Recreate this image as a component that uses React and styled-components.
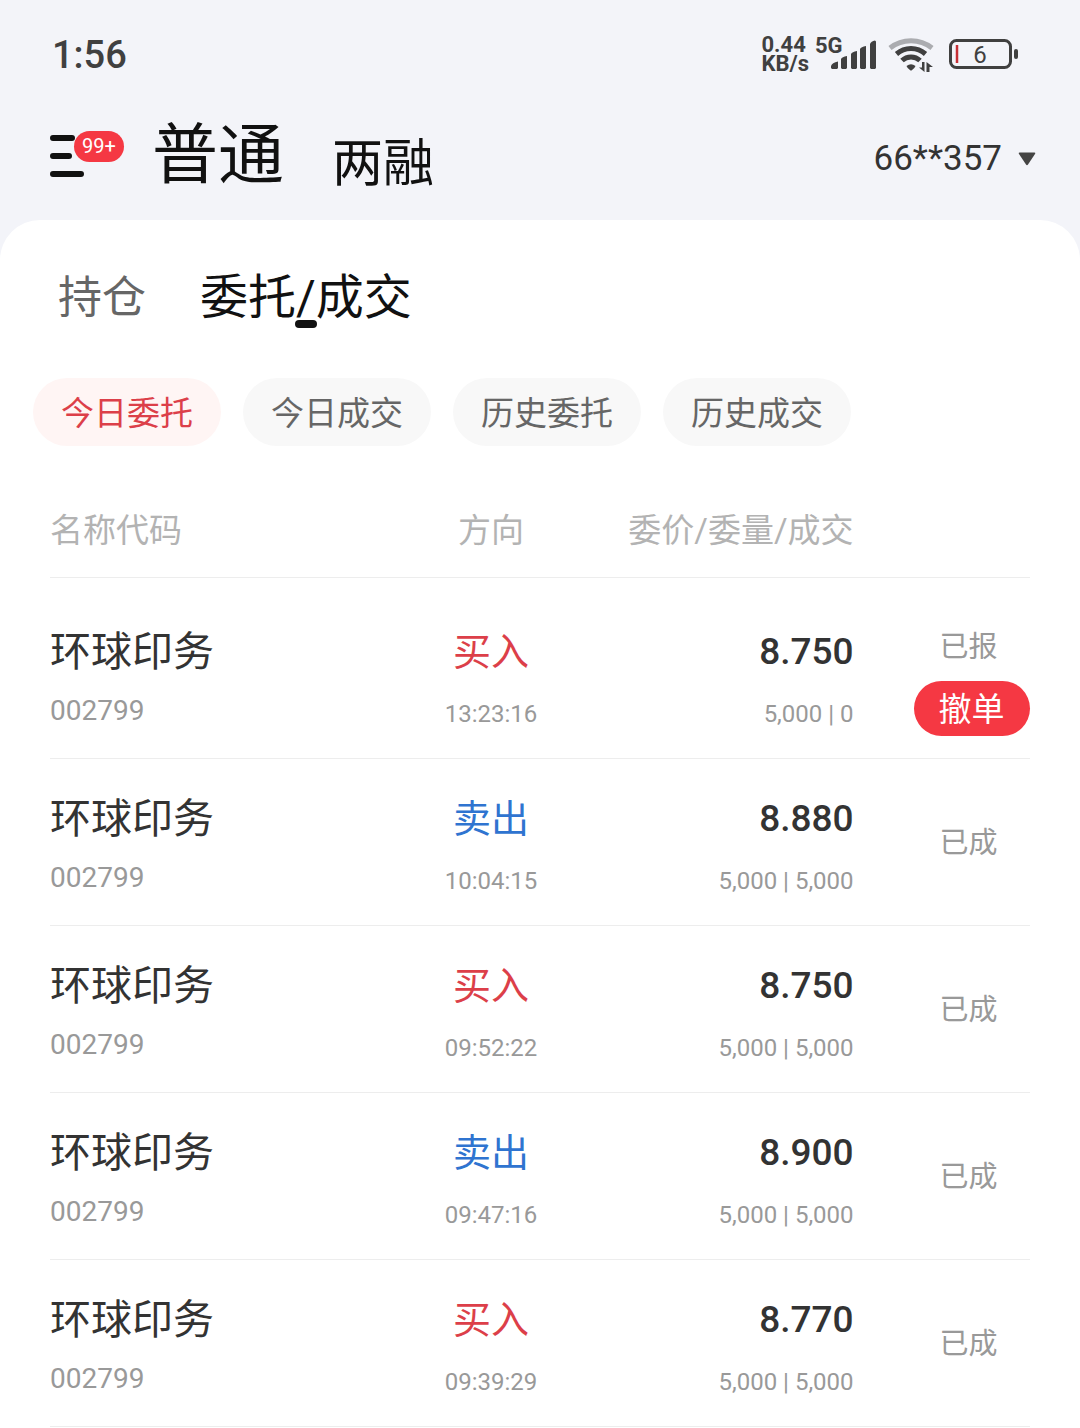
import React, { useState } from "react";
import styled, { createGlobalStyle } from "styled-components";

const GlobalStyle = createGlobalStyle`
  * {
    box-sizing: border-box;
  }

  body {
    margin: 0;
    background: #fff;
    color: #333;
    font-family: Roboto, "Noto Sans CJK SC", sans-serif;
  }

  button {
    margin: 0;
    padding: 0;
    border: 0;
    background: none;
    color: inherit;
    font: inherit;
    white-space: nowrap;
    cursor: pointer;
  }
`;

const Page = styled.div`
  min-height: 100vh;
  background: #f3f4f9;
`;

const StatusBar = styled.div`
  display: flex;
  align-items: center;
  justify-content: space-between;
  height: 108px;
  padding: 0 62px 0 52px;
  color: #404040;
`;

const Clock = styled.time`
  padding-top: 2px;
  font-size: 38px;
  font-weight: 500;
  line-height: 48px;
`;

const StatusIcons = styled.div`
  display: flex;
  align-items: center;
`;

const NetSpeed = styled.div`
  display: flex;
  flex-direction: column;
  margin-right: 6px;
  font-size: 22px;
  font-weight: 700;
  line-height: 19px;
`;

const Signal = styled.div`
  display: grid;
  width: 61px;
  height: 36px;
  margin-right: 12px;
  padding-bottom: 3px;

  > * {
    grid-area: 1 / 1;
  }

  svg {
    place-self: end;
  }
`;

const Network = styled.span`
  font-size: 22px;
  font-weight: 700;
  line-height: 19px;
`;

const WifiIcon = styled.svg`
  margin-right: 14px;
`;

const Header = styled.header`
  display: flex;
  align-items: center;
  justify-content: space-between;
  height: 112px;
  padding: 0 44px 16px 50px;
  color: #111;
`;

const HeaderLeft = styled.div`
  display: flex;
  align-items: center;
`;

const MenuButton = styled.button`
  position: relative;
  display: flex;
  width: 76px;
  margin-right: 26px;
`;

const MenuBadge = styled.span`
  position: absolute;
  top: -3px;
  left: 24px;
  padding: 0 8px;
  border-radius: 16px;
  background: #f53843;
  color: #fff;
  font-size: 20px;
  line-height: 31px;
`;

const AccountTypes = styled.nav`
  display: flex;
  align-items: flex-end;
  gap: 48px;
`;

const AccountType = styled.button`
  font-size: ${(props) => (props.$active ? "66px" : "51px")};
  line-height: ${(props) => (props.$active ? "80px" : "64px")};
`;

const AccountButton = styled.button`
  display: flex;
  align-items: center;
  gap: 16px;
  padding-top: 6px;
  color: #333;
  font-size: 35px;
  line-height: 48px;
`;

const Card = styled.main`
  min-height: calc(100vh - 220px);
  padding-top: 42px;
  border-radius: 40px 40px 0 0;
  background: #fff;
`;

const Tabs = styled.nav`
  display: flex;
  align-items: center;
  gap: 54px;
  padding: 0 58px;
`;

const Tab = styled.button`
  position: relative;
  color: ${(props) => (props.$active ? "#111" : "#666")};
  font-size: ${(props) => (props.$active ? "48px" : "44px")};
  line-height: 72px;

  &::after {
    content: "";
    position: absolute;
    bottom: 6px;
    left: calc(50% - 11px);
    display: ${(props) => (props.$active ? "block" : "none")};
    width: 22px;
    height: 8px;
    border-radius: 4px;
    background: #111;
  }
`;

const Chips = styled.div`
  display: flex;
  flex-wrap: wrap;
  gap: 22px;
  padding: 44px 33px 0;
`;

const Chip = styled.button`
  padding: 4px 28px 0;
  border-radius: 34px;
  background: ${(props) => (props.$active ? "#fff5f4" : "#f8f8f8")};
  color: ${(props) => (props.$active ? "#dc3f49" : "#666")};
  font-size: 33px;
  line-height: 64px;
`;

const TableWrapper = styled.div`
  padding: 61px 50px 0;
`;

const OrderTable = styled.table`
  width: 100%;
  table-layout: fixed;
  border-collapse: separate;
  border-spacing: 0;
`;

const Column = styled.col`
  width: ${(props) => props.$width};
`;

const HeadCell = styled.th`
  padding: 0 0 22px;
  border-bottom: 1px solid #ededed;
  color: #b3b3b3;
  font-size: 33px;
  font-weight: 400;
  line-height: 48px;
  text-align: ${(props) => props.$align || "left"};
  white-space: nowrap;
`;

const OrderRow = styled.tr`
  &:first-child > td {
    padding-top: 48px;
  }
`;

const Cell = styled.td`
  padding: 34px 0 26px;
  border-bottom: 1px solid #ededed;
  text-align: ${(props) => props.$align || "left"};
  vertical-align: top;
  white-space: nowrap;
`;

const StatusCell = styled(Cell)`
  padding: 36px 0 34px 60px;
  vertical-align: middle;

  ${OrderRow}:first-child > & {
    padding: 50px 0 22px 60px;
  }
`;

const StockName = styled.div`
  font-size: 41px;
  line-height: 52px;
`;

const StockCode = styled.div`
  margin-top: 15px;
  color: #999;
  font-size: 28px;
  line-height: 36px;
`;

const Direction = styled.div`
  color: ${(props) => (props.$side === "buy" ? "#dc3f49" : "#2f74d0")};
  font-size: 38px;
  line-height: 52px;
`;

const Price = styled.div`
  font-size: 37px;
  font-weight: 500;
  line-height: 52px;
`;

const SubText = styled.div`
  margin-top: 18px;
  color: #999;
  font-size: 24px;
  line-height: 36px;
`;

const StatusText = styled.div`
  padding-left: 26px;
  color: #999;
  font-size: 29px;
  line-height: 36px;
`;

const CancelButton = styled.button`
  display: block;
  width: 116px;
  margin-top: 16px;
  padding-top: 2px;
  border-radius: 28px;
  background: #f53843;
  color: #fff;
  font-size: 33px;
  line-height: 53px;
`;

const chips = ["今日委托", "今日成交", "历史委托", "历史成交"];

const orders = [
  { side: "buy", time: "13:23:16", price: "8.750", filled: "0", open: true },
  { side: "sell", time: "10:04:15", price: "8.880", filled: "5,000" },
  { side: "buy", time: "09:52:22", price: "8.750", filled: "5,000" },
  { side: "sell", time: "09:47:16", price: "8.900", filled: "5,000" },
  { side: "buy", time: "09:39:29", price: "8.770", filled: "5,000" },
];

const PhoneStatus = () => (
  <StatusBar>
    <Clock>1:56</Clock>
    <StatusIcons>
      <NetSpeed>
        <span>0.44</span>
        <span>KB/s</span>
      </NetSpeed>
      <Signal>
        <Network>5G</Network>
        <svg width="45" height="29" viewBox="0 0 45 29" fill="#404040">
          <path d="M0 28V26Q1 22.500 7 21.500V28L6 29H1Z" />
          <path d="M10 19Q11 17 16 16V28L15 29H11L10 28Z" />
          <path d="M20 14Q21 12 26 11V28L25 29H21L20 28Z" />
          <path d="M29 9Q30 7 35 6V28L34 29H30L29 28Z" />
          <path d="M39 4Q40 1 44 0.500L45 1.500V28L44 29H40L39 28Z" />
        </svg>
      </Signal>
      <WifiIcon width="46" height="36" viewBox="0 0 46 36" fill="none">
        <path d="M2 12A34 34 0 0 1 44 12" stroke="#abacb0" strokeWidth="5" />
        <path d="M8.500 18A22 22 0 0 1 37.500 18" stroke="#404040" strokeWidth="5" />
        <path d="M14 24.500A13 13 0 0 1 32 24.500" stroke="#404040" strokeWidth="5" />
        <path d="M18.500 30Q23 26.500 27.500 30Q27 32 23.500 34.500H22.500Q19 32 18.500 30Z" fill="#404040" />
        <path d="M36.500 26V36L31 31.500H34V26Z" fill="#404040" />
        <path d="M38.500 36V26L45 31H41.500V36Z" fill="#404040" />
      </WifiIcon>
      <svg width="70" height="32" viewBox="0 0 70 32">
        <rect x="2.500" y="2.500" width="60" height="27" rx="6" fill="none" stroke="#404040" strokeWidth="3" />
        <rect x="66" y="11" width="4" height="10" rx="2" fill="#404040" />
        <path d="M9 7V25" stroke="#c62f35" strokeWidth="2.500" />
        <text x="32" y="25" textAnchor="middle" fontSize="24" fill="#404040">
          6
        </text>
      </svg>
    </StatusIcons>
  </StatusBar>
);

const App = () => {
  const [chip, setChip] = useState(chips[0]);

  return (
    <Page>
      <GlobalStyle />
      <PhoneStatus />
      <Header>
        <HeaderLeft>
          <MenuButton type="button">
            <svg width="36" height="44" viewBox="0 0 36 44" stroke="#111" strokeWidth="6" strokeLinecap="round">
              <path d="M3 4H22M3 22H19M3 40H31" />
            </svg>
            <MenuBadge>99+</MenuBadge>
          </MenuButton>
          <AccountTypes>
            <AccountType type="button" $active>
              普通
            </AccountType>
            <AccountType type="button">两融</AccountType>
          </AccountTypes>
        </HeaderLeft>
        <AccountButton type="button">
          66**357
          <svg width="18" height="14" viewBox="0 0 18 14" fill="#444">
            <path d="M1.500 0.500H16.500Q18 0.500 17 2L10 12.500Q9 14 8 12.500L1 2Q0 0.500 1.500 0.500Z" />
          </svg>
        </AccountButton>
      </Header>
      <Card>
        <Tabs>
          <Tab type="button">持仓</Tab>
          <Tab type="button" $active>
            委托/成交
          </Tab>
        </Tabs>
        <Chips>
          {chips.map((label) => (
            <Chip key={label} type="button" $active={label === chip} onClick={() => setChip(label)}>
              {label}
            </Chip>
          ))}
        </Chips>
        <TableWrapper>
          <OrderTable>
            <colgroup>
              <Column $width="31%" />
              <Column $width="28%" />
              <Column $width="23%" />
              <Column $width="18%" />
            </colgroup>
            <thead>
              <tr>
                <HeadCell>名称代码</HeadCell>
                <HeadCell $align="center">方向</HeadCell>
                <HeadCell $align="right">委价/委量/成交</HeadCell>
                <HeadCell />
              </tr>
            </thead>
            <tbody>
              {orders.map((order) => (
                <OrderRow key={order.time}>
                  <Cell>
                    <StockName>环球印务</StockName>
                    <StockCode>002799</StockCode>
                  </Cell>
                  <Cell $align="center">
                    <Direction $side={order.side}>{order.side === "buy" ? "买入" : "卖出"}</Direction>
                    <SubText>{order.time}</SubText>
                  </Cell>
                  <Cell $align="right">
                    <Price>{order.price}</Price>
                    <SubText>5,000 | {order.filled}</SubText>
                  </Cell>
                  <StatusCell>
                    <StatusText>{order.open ? "已报" : "已成"}</StatusText>
                    {order.open && <CancelButton type="button">撤单</CancelButton>}
                  </StatusCell>
                </OrderRow>
              ))}
            </tbody>
          </OrderTable>
        </TableWrapper>
      </Card>
    </Page>
  );
};

export default App;
